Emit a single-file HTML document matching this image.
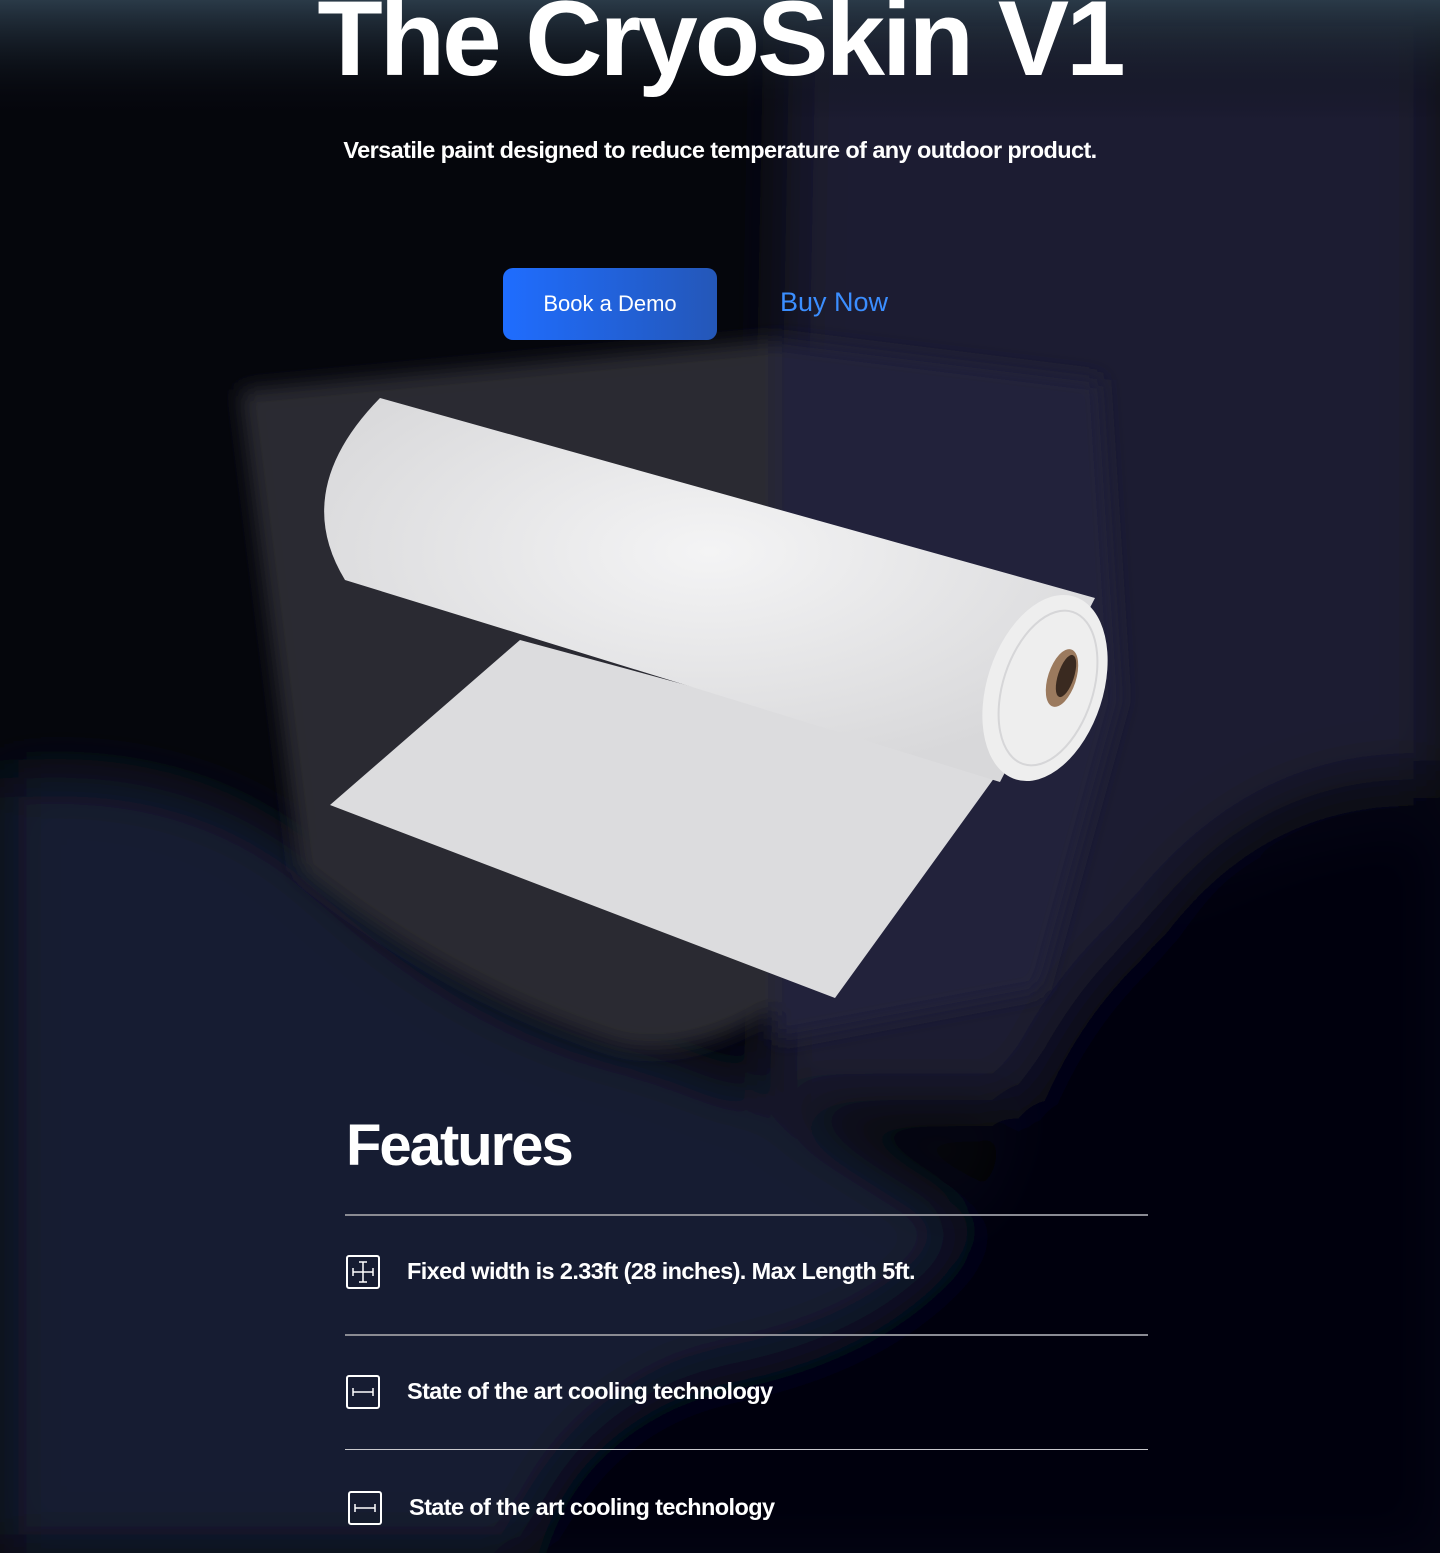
<!DOCTYPE html>
<html><head><meta charset="utf-8"><style>
html,body{margin:0;padding:0}
body{width:1440px;height:1553px;position:relative;overflow:hidden;background:#05060c;font-family:"Liberation Sans",sans-serif;color:#fff}
.abs{position:absolute}
h1{position:absolute;left:0;width:1440px;top:-22px;margin:0;text-align:center;font-size:107px;font-weight:700;letter-spacing:-3px;line-height:120px}
.sub{top:137px;left:0;width:1440px;text-align:center;font-size:23.5px;font-weight:700;letter-spacing:-0.6px}
.btn{left:503px;top:268px;width:214px;height:72px;border-radius:10px;background:linear-gradient(90deg,#1f6dff,#2457b8);font-size:22px;line-height:72px;text-align:center}
.buy{left:780px;top:287px;font-size:27px;color:#3b8eff}
.feat{left:346px;top:1112px;font-size:58px;font-weight:700;letter-spacing:-2px}
.line{left:345px;width:803px;height:2px;background:#8a8b93}
.row{left:407px;font-size:23.5px;font-weight:700;letter-spacing:-0.6px}
</style></head><body>
<svg class="abs" style="left:0;top:0" width="1440" height="1553">
<defs>
<linearGradient id="top" x1="0" y1="0" x2="0" y2="1"><stop offset="0" stop-color="#2a3a48"/><stop offset="1" stop-color="#05060c" stop-opacity="0"/></linearGradient>
<radialGradient id="rr" cx="0.5" cy="0.4" r="0.6"><stop offset="0" stop-color="#f4f4f5"/><stop offset="1" stop-color="#d8d8da"/></radialGradient>
<filter id="b" x="-20%" y="-20%" width="140%" height="140%"><feGaussianBlur stdDeviation="28"/></filter>
<filter id="b2" x="-20%" y="-20%" width="140%" height="140%"><feGaussianBlur stdDeviation="10"/></filter>
</defs>
<rect width="1440" height="1553" fill="#05060c"/>
<g filter="url(#b)">
<path d="M790 0 L1440 0 L1440 780 Q1180 760 1050 1100 L770 1100 Z" fill="#1b1d31"/>
<path d="M0 780 Q200 760 330 880 Q480 1020 650 1055 L770 1100 L960 1220 L1440 1330 L1440 1553 L0 1553 Z" fill="#171a30"/>
<path d="M1440 820 Q1100 840 1000 1150 Q950 1330 700 1370 Q560 1420 520 1553 L1440 1553 Z" fill="#04050a"/>
</g>
<rect width="1440" height="120" fill="url(#top)"/>
<g filter="url(#b2)">
<path d="M240 390 L780 340 L785 1000 Q700 1060 620 1045 Q450 990 300 870 Z" fill="#2a2b33"/>
<path d="M775 340 L1100 380 L1120 700 L1040 990 L775 1040 Z" fill="#22243a"/>
</g>
<!-- sheet -->
<path d="M520 640 L330 805 L835 998 L1000 770 Z" fill="#dcdcde"/>
<!-- roll body -->
<path d="M380 398 L1095 598 L1000 782 L345 580 Q290 490 380 398 Z" fill="url(#rr)"/>
<ellipse cx="1045" cy="688" rx="58" ry="96" transform="rotate(18 1045 688)" fill="#eeeeee"/>
<ellipse cx="1048" cy="688" rx="45" ry="80" transform="rotate(18 1048 688)" fill="none" stroke="#d6d6d8" stroke-width="2"/>
<ellipse cx="1062" cy="678" rx="14" ry="30" transform="rotate(18 1062 678)" fill="#9b7a5e"/>
<ellipse cx="1066" cy="676" rx="8" ry="22" transform="rotate(18 1066 676)" fill="#3a2a20"/>
</svg>
<h1>The CryoSkin V1</h1>
<div class="abs sub">Versatile paint designed to reduce temperature of any outdoor product.</div>
<div class="abs btn">Book a Demo</div>
<div class="abs buy">Buy Now</div>
<div class="abs feat">Features</div>
<div class="abs line" style="top:1214px"></div>
<div class="abs line" style="top:1334px"></div>
<div class="abs line" style="top:1449px;height:1px;background:#c8c8cc"></div>
<svg class="abs" style="left:346px;top:1255px" width="36" height="36"><rect x="1" y="1" width="32" height="32" rx="2" fill="none" stroke="#fff" stroke-width="2"/><path d="M17 7V27M7 17H27M7 13V21M27 13V21M13 7H21M13 27H21" stroke="#fff" stroke-width="1.5" fill="none"/></svg>
<svg class="abs" style="left:346px;top:1375px" width="36" height="36"><rect x="1" y="1" width="32" height="32" rx="2" fill="none" stroke="#fff" stroke-width="2"/><path d="M7 17H27M7 13V21M27 13V21" stroke="#fff" stroke-width="1.5" fill="none"/></svg>
<svg class="abs" style="left:348px;top:1491px" width="36" height="36"><rect x="1" y="1" width="32" height="32" rx="2" fill="none" stroke="#fff" stroke-width="2"/><path d="M7 17H27M7 13V21M27 13V21" stroke="#fff" stroke-width="1.5" fill="none"/></svg>
<div class="abs row" style="top:1258px">Fixed width is 2.33ft (28 inches). Max Length 5ft.</div>
<div class="abs row" style="top:1378px">State of the art cooling technology</div>
<div class="abs row" style="top:1494px;left:409px">State of the art cooling technology</div>
</body></html>
